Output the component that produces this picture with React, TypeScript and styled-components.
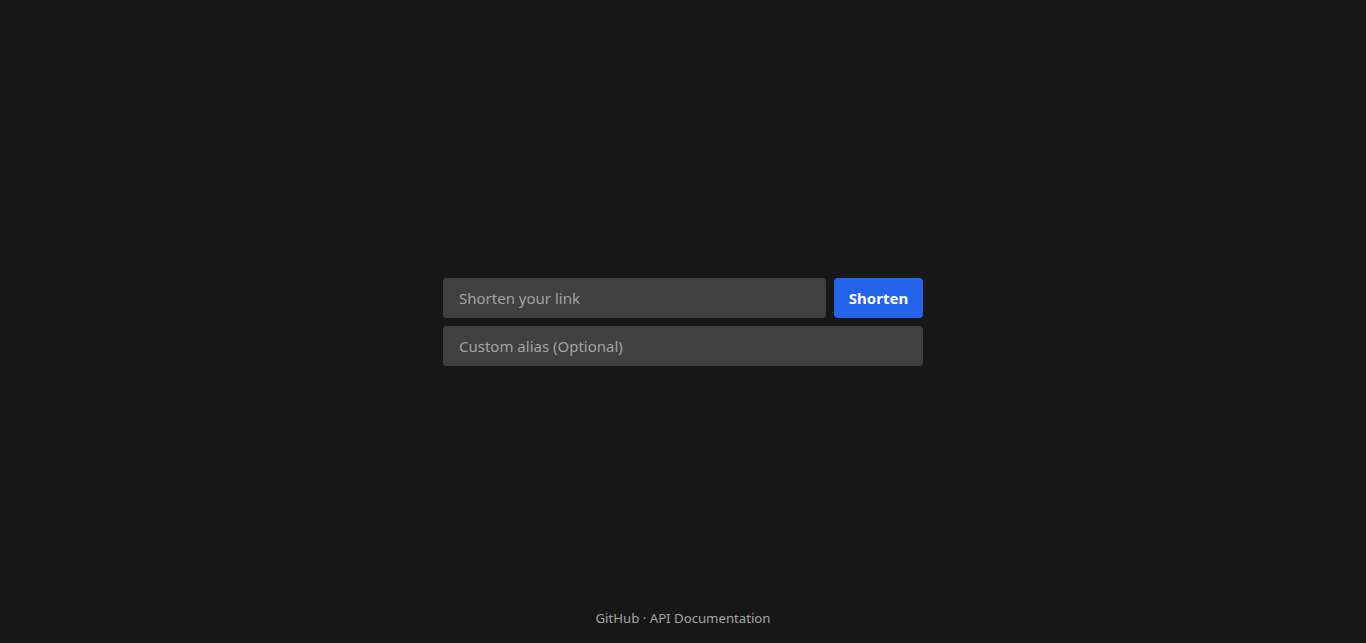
import React from "react";
import styled, { createGlobalStyle } from "styled-components";

const Global = createGlobalStyle`
  * { box-sizing: border-box; }
  html, body { margin: 0; padding: 0; background: #171717; }
  body { font-family: "Segoe UI", "Noto Sans", "Open Sans", sans-serif; }
`;

const Page = styled.div`
  height: 100vh;
  display: grid;
  grid-template-rows: 1fr auto 1fr;
  justify-items: center;
`;

const Form = styled.form`
  grid-row: 2;
  width: 480px;
  display: flex;
  flex-direction: column;
  gap: 8px;
`;

const Row = styled.div`
  display: flex;
  gap: 8px;
`;

const Input = styled.input<{ $grow?: boolean }>`
  flex: ${(p) => (p.$grow ? "1 1 auto" : "none")};
  width: ${(p) => (p.$grow ? "auto" : "100%")};
  min-width: 0;
  height: 40px;
  padding: 0 16px;
  border: none;
  border-radius: 4px;
  background: #404040;
  color: #e5e5e5;
  font-family: inherit;
  font-size: 15px;
  outline: none;
  &::placeholder { color: #a3a3a3; }
`;

const Button = styled.button`
  flex: none;
  width: 89px;
  height: 40px;
  border: none;
  border-radius: 4px;
  background: #2563eb;
  color: #ffffff;
  font-family: inherit;
  font-size: 15px;
  font-weight: 700;
  cursor: pointer;
`;

const Footer = styled.footer`
  grid-row: 3;
  align-self: end;
  padding-bottom: 15px;
  font-size: 13.2px;
  line-height: 20px;
  color: #a3a3a3;
`;

const Link = styled.a`
  color: inherit;
  text-decoration: none;
`;

export default function App() {
  return (
    <>
      <Global />
      <Page>
        <Form onSubmit={(e) => e.preventDefault()}>
          <Row>
            <Input $grow placeholder="Shorten your link" />
            <Button type="submit">Shorten</Button>
          </Row>
          <Input placeholder="Custom alias (Optional)" />
        </Form>
        <Footer>
          <Link href="#">GitHub</Link> · <Link href="#">API Documentation</Link>
        </Footer>
      </Page>
    </>
  );
}
